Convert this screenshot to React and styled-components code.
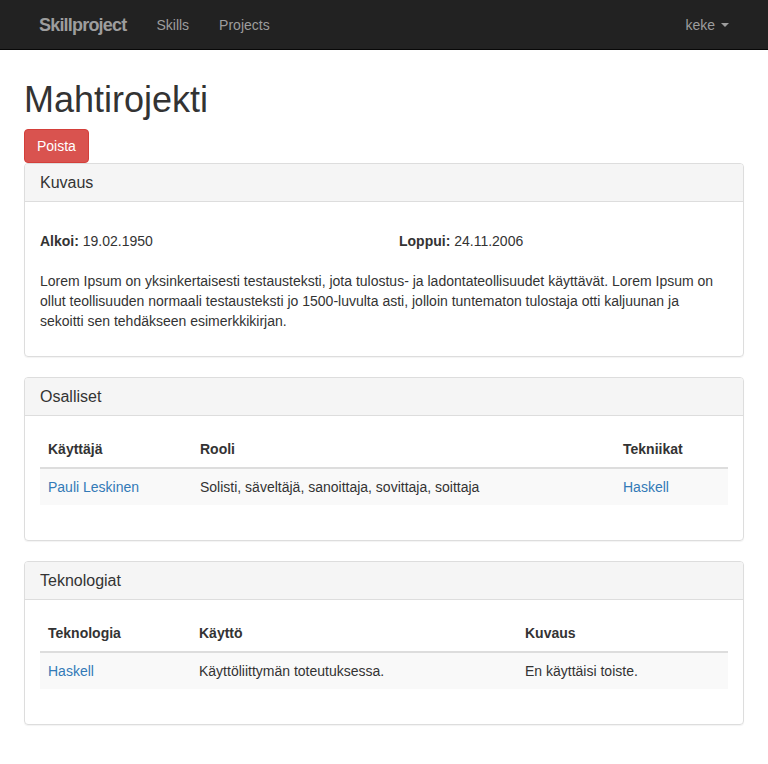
import React from 'react';
import styled, { createGlobalStyle } from 'styled-components';

const GlobalStyle = createGlobalStyle`
  * { box-sizing: border-box; }
  body {
    margin: 0;
    font-family: "Liberation Sans", Arial, sans-serif;
    font-size: 14px;
    line-height: 20px;
    color: #333;
    background: #fff;
  }
`;

const Navbar = styled.nav`
  height: 50px;
  background: #222;
  border-bottom: 1px solid #080808;
`;

const NavInner = styled.div`
  display: flex;
  align-items: center;
  height: 49px;
  padding: 0 24px;
`;

const Brand = styled.a`
  padding: 0 15px;
  font-size: 18px;
  font-weight: bold;
  letter-spacing: -0.8px;
  color: #9d9d9d;
  text-decoration: none;
`;

const NavLink = styled.a`
  padding: 0 15px;
  color: #9d9d9d;
  text-decoration: none;
  margin-left: ${p => (p.right ? 'auto' : '0')};
  display: flex;
  align-items: center;
`;

const Caret = styled.span`
  display: inline-block;
  width: 0;
  height: 0;
  margin-left: 6px;
  border-top: 4px solid #9d9d9d;
  border-left: 4px solid transparent;
  border-right: 4px solid transparent;
`;

const Container = styled.div`
  padding: 30px 24px 20px;
`;

const Title = styled.h1`
  margin: 0 0 10px;
  font-size: 36px;
  font-weight: 500;
  line-height: 39px;
  font-family: "Liberation Sans", Arial, sans-serif;
  color: #333;
`;

const DangerButton = styled.button`
  display: block;
  font-family: inherit;
  font-size: 14px;
  line-height: 20px;
  padding: 6px 12px;
  color: #fff;
  background: #d9534f;
  border: 1px solid #d43f3a;
  border-radius: 4px;
`;

const Panel = styled.section`
  border: 1px solid #ddd;
  border-radius: 4px;
  box-shadow: 0 1px 1px rgba(0, 0, 0, 0.05);
  margin-bottom: 20px;
  overflow: hidden;
`;

const PanelHeading = styled.div`
  padding: 9px 15px;
  background: #f5f5f5;
  border-bottom: 1px solid #ddd;
  font-size: 16px;
  line-height: 19px;
`;

const PanelBody = styled.div`
  padding: 15px;
`;

const DateRow = styled.div`
  display: grid;
  grid-template-columns: 359px 1fr;
  margin: 14px 0 20px;
`;

const Para = styled.p`
  margin: 0 0 10px;
`;

const Table = styled.table`
  width: 100%;
  border-collapse: collapse;
  margin-bottom: 20px;
`;

const Th = styled.th`
  text-align: left;
  padding: 8px;
  font-weight: bold;
  border-bottom: 2px solid #ddd;
  width: ${p => p.w || 'auto'};
`;

const Tr = styled.tr`
  background: #f9f9f9;
`;

const Td = styled.td`
  padding: 8px;
  border-top: 1px solid #ddd;
`;

const Link = styled.a`
  color: #337ab7;
  text-decoration: none;
`;

export default function App() {
  return (
    <>
      <GlobalStyle />
      <Navbar>
        <NavInner>
          <Brand>Skillproject</Brand>
          <NavLink>Skills</NavLink>
          <NavLink>Projects</NavLink>
          <NavLink right>keke<Caret /></NavLink>
        </NavInner>
      </Navbar>
      <Container>
        <Title>Mahtirojekti</Title>
        <DangerButton>Poista</DangerButton>

        <Panel>
          <PanelHeading>Kuvaus</PanelHeading>
          <PanelBody>
            <DateRow>
              <div><b>Alkoi:</b> 19.02.1950</div>
              <div><b>Loppui:</b> 24.11.2006</div>
            </DateRow>
            <Para>
              Lorem Ipsum on yksinkertaisesti testausteksti, jota tulostus- ja ladontateollisuudet käyttävät. Lorem Ipsum on
              ollut teollisuuden normaali testausteksti jo 1500-luvulta asti, jolloin tuntematon tulostaja otti kaljuunan ja<br />
              sekoitti sen tehdäkseen esimerkkikirjan.
            </Para>
          </PanelBody>
        </Panel>

        <Panel>
          <PanelHeading>Osalliset</PanelHeading>
          <PanelBody>
            <Table>
              <thead>
                <tr>
                  <Th w="152px">Käyttäjä</Th>
                  <Th>Rooli</Th>
                  <Th w="113px">Tekniikat</Th>
                </tr>
              </thead>
              <tbody>
                <Tr>
                  <Td><Link>Pauli Leskinen</Link></Td>
                  <Td>Solisti, säveltäjä, sanoittaja, sovittaja, soittaja</Td>
                  <Td><Link>Haskell</Link></Td>
                </Tr>
              </tbody>
            </Table>
          </PanelBody>
        </Panel>

        <Panel>
          <PanelHeading>Teknologiat</PanelHeading>
          <PanelBody>
            <Table>
              <thead>
                <tr>
                  <Th w="151px">Teknologia</Th>
                  <Th>Käyttö</Th>
                  <Th w="211px">Kuvaus</Th>
                </tr>
              </thead>
              <tbody>
                <Tr>
                  <Td><Link>Haskell</Link></Td>
                  <Td>Käyttöliittymän toteutuksessa.</Td>
                  <Td>En käyttäisi toiste.</Td>
                </Tr>
              </tbody>
            </Table>
          </PanelBody>
        </Panel>
      </Container>
    </>
  );
}
